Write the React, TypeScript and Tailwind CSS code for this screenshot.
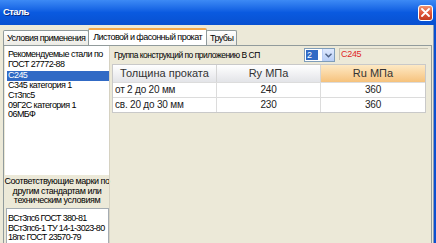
import React from "react";

const leftSteels = ["С245", "С345  категория 1", "Ст3пс5", "09Г2С категория 1", "06МБФ"];
const analogs = ["ВСт3пс6 ГОСТ 380-81", "ВСт3пс6-1 ТУ 14-1-3023-80", "18пс ГОСТ 23570-79"];
const rows = [
  { t: "от 2 до 20 мм", ry: "240", ru: "360" },
  { t: "св. 20 до 30 мм", ry: "230", ru: "360" },
];

function CloseButton() {
  return (
    <div className="w-[15px] h-[16px] rounded-[3px] border border-white bg-gradient-to-b from-[#f0926e] via-[#e0553a] to-[#c33a1e] flex items-center justify-center">
      <svg width="9" height="9" viewBox="0 0 9 9">
        <path d="M1 1 L8 8 M8 1 L1 8" stroke="white" strokeWidth="1.8" strokeLinecap="round" />
      </svg>
    </div>
  );
}

function Combo() {
  return (
    <div className="flex items-stretch h-[14px] w-[31px] border border-[#7f9db9] bg-white">
      <div className="flex-1 p-[1px]">
        <div className="bg-[#316ac5] text-white h-full w-[12px] leading-[11px] pl-[1px]">2</div>
      </div>
      <div className="w-[12px] bg-gradient-to-b from-[#dfe9fd] to-[#b7cdf6] border-l border-[#b9cdf5] flex items-center justify-center">
        <svg width="7" height="5" viewBox="0 0 7 5">
          <path d="M0.5 0.8 L3.5 3.8 L6.5 0.8" stroke="#4d6185" strokeWidth="1.4" fill="none" />
        </svg>
      </div>
    </div>
  );
}

export default function App() {
  return (
    <div className="w-[436px] h-[243px] overflow-hidden flex flex-col bg-[#ece9d8] text-[9px] tracking-[-0.55px] whitespace-nowrap text-black font-['Liberation_Sans',Arial,sans-serif]">
      <div className="h-[25px] shrink-0 flex items-center justify-between pl-[3px] pr-[3px] bg-gradient-to-b from-[#3d8af5] via-[#0a5ae0] to-[#0850d0]">
        <span className="text-white font-bold text-[9.5px] tracking-[-0.6px] [text-shadow:1px_1px_0_#0a2a80]">Сталь</span>
        <CloseButton />
      </div>
      <div className="flex-1 flex">
        <div className="flex-1 flex flex-col pl-[3px] pt-[3px]">
          <div className="flex items-end h-[17px]">
            <div className="h-[15px] px-[3px] border border-b-0 border-[#919b9c] rounded-t-[2px] bg-gradient-to-b from-white to-[#ecebe5] leading-[14px]">
              Условия применения
            </div>
            <div className="h-[17px] px-[4px] border border-b-0 border-[#919b9c] border-t-[2px] border-t-[#f5a94a] rounded-t-[2px] bg-white leading-[15px] -mx-[1px] relative">
              Листовой и фасонный прокат
            </div>
            <div className="h-[15px] px-[3px] border border-b-0 border-[#919b9c] rounded-t-[2px] bg-gradient-to-b from-white to-[#ecebe5] leading-[14px]">
              Трубы
            </div>
          </div>
          <div className="flex-1 flex border-t border-l border-r border-[#919b9c] mr-[1px] pl-[1px]">
            <div className="w-[104px] flex flex-col">
              <div className="h-[129px] bg-white pl-[3px] pt-[4px] leading-[9.7px]">
                <div>Рекомендуемые стали по</div>
                <div>ГОСТ 27772-88</div>
                {leftSteels.map((s, i) => (
                  <div key={s} className={i === 0 ? "bg-[#316ac5] text-white -ml-[1px] pl-[1px] mt-[2px]" : ""}>
                    {s}
                  </div>
                ))}
              </div>
              <div className="h-[33px] flex flex-col items-center justify-center leading-[9.7px] text-center tracking-[-0.45px]">
                <div>Соответствующие марки по</div>
                <div>другим стандартам или</div>
                <div>техническим условиям</div>
              </div>
              <div className="flex-1 bg-white border border-[#a5acb2] ml-[1px] pl-[1px] pt-[5px] leading-[9.7px] tracking-[-0.7px]">
                {analogs.map((a) => (
                  <div key={a}>{a}</div>
                ))}
              </div>
            </div>
            <div className="flex-1 flex flex-col pl-[2px] pr-[3px] border-l border-[#d6d2c2]">
              <div className="h-[17px] flex items-center pt-[1px]">
                <span className="ml-[2px] w-[190px] text-[8.5px] tracking-[-0.5px]">Группа конструкций по приложению В СП</span>
                <Combo />
                <div className="flex-1 ml-[4px] mt-[-2px] h-[12px] border-t border-l border-[#c8c4b4] text-[#e02828] pl-[1px] leading-[11px] tracking-[-0.3px]">
                  С245
                </div>
              </div>
              <div className="mt-[1px] w-[314px] border border-[#c9c9c9] bg-white">
                <div className="grid grid-cols-3 h-[17px] text-[11px] tracking-normal text-[#333]">
                  <div className="flex items-center justify-center bg-gradient-to-b from-white to-[#e3e4e8] border-r border-[#d5d5d5]">
                    Толщина проката
                  </div>
                  <div className="flex items-center justify-center bg-gradient-to-b from-white to-[#e3e4e8] border-r border-[#d5d5d5]">
                    Ry МПа
                  </div>
                  <div className="flex items-center justify-center bg-gradient-to-b from-[#fde9c4] to-[#f6c27c]">Ru МПа</div>
                </div>
                {rows.map((r) => (
                  <div key={r.t} className="grid grid-cols-3 h-[15px] border-t border-[#dcdcdc] leading-[14px] text-[10px] tracking-[-0.2px] text-[#222]">
                    <div className="pl-[2px] border-r border-[#dcdcdc]">{r.t}</div>
                    <div className="text-center border-r border-[#dcdcdc]">{r.ry}</div>
                    <div className="text-center">{r.ru}</div>
                  </div>
                ))}
              </div>
            </div>
          </div>
        </div>
        <div className="w-[3px] bg-[#0a50d0] border-l border-[#8a9ab8]" />
      </div>
    </div>
  );
}
